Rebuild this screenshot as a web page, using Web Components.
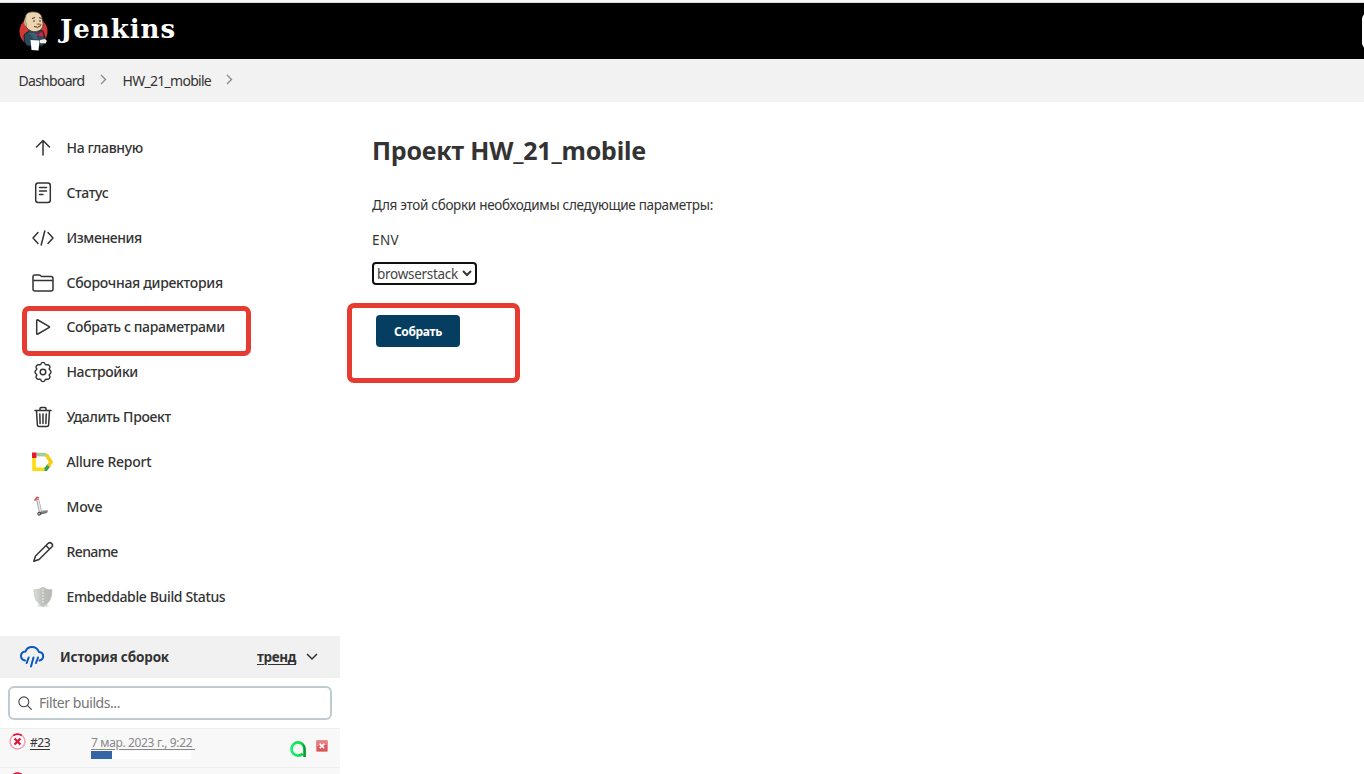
<!DOCTYPE html>
<html lang="ru">
<head>
<meta charset="utf-8">
<title>HW_21_mobile [Jenkins]</title>
<style>
html,body{margin:0;height:774px;overflow:hidden;background:#fff}
body{font-family:"Noto Sans","Open Sans",sans-serif;font-size:14px;color:#333}
</style>
</head>
<body>
<jenkins-app></jenkins-app>
<script>
const icons = {
up:'<g fill="none" stroke="#333" stroke-width="1.5" stroke-linecap="round" stroke-linejoin="round"><path d="M5.5 11 12 4.5 18.500 11M12 5v14"/></g>',
doc:'<g fill="none" stroke="#333" stroke-width="1.500" stroke-linecap="round"><rect x="4.700" y="2" width="14.600" height="19.500" rx="2.500"/><path d="M8.500 6.500h7M8.500 10h7M8.500 13.500h3.500"/></g>',
code:'<g fill="none" stroke="#333" stroke-width="1.500" stroke-linecap="round" stroke-linejoin="round"><path d="M7 6.500 2 12l5 5.500M17 6.500l5 5.500-5 5.500M13.800 5l-3.600 14"/></g>',
folder:'<g fill="none" stroke="#333" stroke-width="1.500" stroke-linejoin="round"><path d="M2 18V5.500Q2 4 3.500 4H8q1 0 2 1l.6.500H20q2 0 2 2V18q0 2-2 2H4q-2 0-2-2zM2 9.500h20"/></g>',
play:'<path d="M5.700 5.700v12.600q0 1.300 1.200.700l11-6.300q1.200-.700 0-1.400l-11-6.300q-1.200-.600-1.200.700z" fill="none" stroke="#333" stroke-width="1.500"/>',
gear:'<g transform="translate(12 12) scale(.0445) translate(-256 -256)" fill="none" stroke="#333" stroke-width="33" stroke-linejoin="round"><circle cx="256" cy="256" r="62"/><path d="M205 84Q256 -2 307 84Q320 106 347 107Q448 103 398 190Q372 222 390 244Q455 296 398 332Q398 332 398 332" stroke="none"/><path d="M210 74Q218 40 256 40T302 74Q312 102 342 94Q378 82 400 112Q424 142 406 166Q384 190 410 210Q462 256 410 302Q384 322 406 346Q424 370 400 400Q378 430 342 418Q312 410 302 438Q294 472 256 472T210 438Q200 410 170 418Q134 430 112 400Q88 370 106 346Q128 322 102 302Q50 256 102 210Q128 190 106 166Q88 142 112 112Q134 82 170 94Q200 102 210 74z"/></g>',
trash:'<g fill="none" stroke="#333" stroke-width="1.500" stroke-linecap="round" stroke-linejoin="round"><path d="M5.500 6l.9 14Q6.500 21.500 8 21.500h8q1.500 0 1.600-1.500l.9-14M4 5.500h16M9 5V3.500Q9 2.500 10 2.500h4q1 0 1 1V5M12 9v9.500M8.800 9l.3 9.500M15.200 9l-.3 9.500"/></g>',
allure:'<g fill="none" stroke-width="3.600"><path d="M3 8v11.200h11" stroke="#ffda13"/><path d="M5.500 4.600h9.500" stroke="#9fcca2"/><path d="M13.500 19.200h1.500l3-4" stroke="#36a154"/><path d="M14.700 4.800 16.500 6" stroke="#d8d72c"/><path d="M15.700 5.300 20 12l-2.500 4" stroke="#f8cc18"/></g><path d="M1 2.500h4.500v5.500H1z" fill="#e21a2c"/>',
move:'<path d="M6.500 4 9.500 17" stroke="#999" stroke-width="3"/><path d="M7 5 9.500 17" stroke="#eee" stroke-width="1.500"/><path d="m3.500 5.500 2.500-3 2 .5" fill="none" stroke="#e24a4a" stroke-width="1.600"/><path d="m8.500 17 7-2 1.500.500-1 2.500-8 2z" fill="#777"/><circle cx="8.200" cy="18.700" r="1.500" fill="#bbb" stroke="#333"/><path d="m10.500 16 5.500-.5" stroke="#bbb"/>',
pencil:'<g fill="none" stroke="#333" stroke-width="1.500" stroke-linejoin="round"><path d="M2.800 21.200 4.500 16 17 3.500q2-1.700 3.700 0t0 3.500L8 19.500zM15 5.500l3.700 3.700"/></g>',
shield:'<defs><linearGradient id="m" x1="0" x2="1"><stop stop-color="#dcded9"/><stop offset=".45" stop-color="#bfc2bb"/><stop offset="1" stop-color="#b4b7b0"/></linearGradient></defs><ellipse cx="12" cy="20.700" rx="6" ry="1.300" fill="#ddd"/><path d="M12 2.300Q16 5 21 4.700 21.500 17 12 21.500 2.500 17 3 4.700 8 5 12 2.300z" fill="url(#m)" stroke="#c3c6c0" stroke-width=".8"/><path d="M12 4v15.500" stroke="#eee" stroke-dasharray="2 1"/>',
rain:'<g fill="none" stroke="#0b57c2" stroke-width="2" stroke-linecap="round"><path d="M5 15.500Q1 14.500 1 11q0-4 4.500-4.500Q7 2 12 2t7 5q4.200.500 4.200 4.200 0 3.300-3.700 4.300"/><path d="M8.700 12.500l-2 5.500M13.500 12.500 11 21.500M18 12.500l-2 5.500"/></g>',
search:'<g fill="none" stroke="#444" stroke-width="1.900" stroke-linecap="round"><circle cx="10" cy="10" r="8.500"/><path d="m16.500 16.500 6.500 6.500"/></g>',
fail:'<circle cx="12" cy="12" r="10.500" fill="#fff" stroke="#f2a2ae" stroke-width="2.200"/><path d="M6 3.500Q12-.5 18 3.500" fill="none" stroke="#df1739" stroke-width="2.500"/><path d="m7.800 7.800 8.400 8.400m0-8.400-8.400 8.400" stroke="#df1739" stroke-width="3.300"/>',
ring:'<defs><linearGradient id="g" x1="0" x2="1"><stop stop-color="#16f073"/><stop offset=".75" stop-color="#09dc49"/><stop offset="1" stop-color="#099d34"/></linearGradient></defs><path d="M21.800 24V12A9.800 9.800 0 1 0 12 21.800q4 0 7-2.500" fill="none" stroke="url(#g)" stroke-width="4.200"/>',
delete:'<rect x="1" y="1" width="22" height="22" rx="1.500" fill="#d9575b" stroke="#e58f91" stroke-width="2"/><path d="M2 2h20v8L2 13z" fill="#e98084"/><path d="m7.500 7.500 9 9m0-9-9 9" stroke="#fff" stroke-width="3.500"/>',
butler:'<ellipse cx="14.500" cy="20.500" rx="14" ry="14" fill="#d33833"/><path d="M5 24 11 19l13 1 3 10-4 5H9Q5 34 5 24z" fill="#2c4a5c" stroke="#0c1c26"/><path d="M6.500 13Q4 1 13 .8 23 0 23.500 9q2 8-3 10.500-6 3-11-1Q7 17 6.500 13z" fill="#edd4ae" stroke="#3b3028" stroke-width=".8"/><path d="M6 7q-3 6 1.500 9l1-3Q6 11 8 5z" fill="#b8a589"/><path d="m13 7.500 3-1m4 0 2.500 1M14 10h2m4 0h2M15 15.500q4 2 7-1" fill="none" stroke="#473327"/><path d="M17 13q4-2 6 1-3 1-6-1z" fill="#a97a62"/><path d="m14 21.500 5 2 4.500-3.500 1 6-5.500-1.500-4 2z" fill="#d5284d" stroke="#6c2732" stroke-width=".6"/><path d="M10 22l5 6h4l-3-6z" fill="#3c6078"/><path d="m11.500 29 9 .5-1 10-7-.5z" fill="#fff"/><path d="m21 29 5-1 2 2-1.500 2.500-5.500-.5z" fill="#f7efe4"/>'
};
class JIcon extends HTMLElement{
 connectedCallback(){
  const n=this.getAttribute('name'),s=this.getAttribute('size')||24;
  const h=n==='butler'?40:s;
  this.attachShadow({mode:'open'}).innerHTML=`<style>:host{display:block;flex:none;width:${s}px;height:${h}px}svg{display:block;overflow:visible}</style><svg width="${s}" height="${h}" viewBox="${n==='butler'?'0 0 29 40':'0 0 24 24'}">${icons[n]}</svg>`;
 }
}
customElements.define('j-icon',JIcon);

/* Text label whose tracking is tuned so it occupies a given width. */
class FitText extends HTMLElement{
 connectedCallback(){
  const root=this.attachShadow({mode:'open'});
  const line=this.hasAttribute('underlined')?'text-decoration:underline;text-underline-offset:2px;text-decoration-thickness:1px;':'';
  root.innerHTML=`<style>:host{display:inline-block;white-space:pre;flex:none}span{display:inline-block;${line}}</style><span><slot></slot></span>`;
  const s=root.querySelector('span'),w=+this.getAttribute('w');
  const cur=s.getBoundingClientRect().width;
  if(cur&&w)s.style.letterSpacing=((w-cur)/this.textContent.length)+'px';
 }
}

class JHeader extends HTMLElement{
 connectedCallback(){
  this.attachShadow({mode:'open'}).innerHTML=`<style>
:host{display:block}
.edge{height:2px;background:#f7f8fa;border-bottom:1px solid #d9dadc}
header{height:56px;background:#000;display:flex;align-items:flex-start;justify-content:space-between;overflow:hidden}
.brand{display:flex;padding:8px 0 0 19px;gap:12px}
.name{font:bold 26px/36px "DejaVu Serif",serif;color:#fff}
.field{width:20px;height:36px;margin:10px -18px 0 0;background:#fff;border-radius:6px}
nav{height:43px;background:#f2f2f2;display:flex;align-items:center;padding-left:18.500px;box-sizing:border-box}
svg{margin:0 16px 2px 15px}
.bc{line-height:20px}
</style><div class="edge"></div><header><div class="brand"><j-icon name="butler" size="29"></j-icon><fit-text class="name" w="116">Jenkins</fit-text></div><div class="field"></div></header>
<nav><fit-text class="bc" w="66">Dashboard</fit-text><svg width="7" height="11" viewBox="0 0 7 11"><path d="m1 1 4.500 4.500L1 10" fill="none" stroke="#888" stroke-width="1.300"/></svg><fit-text class="bc" w="88.500">HW_21_mobile</fit-text><svg width="7" height="11" viewBox="0 0 7 11"><path d="m1 1 4.500 4.500L1 10" fill="none" stroke="#888" stroke-width="1.300"/></svg></nav>`;
 }
}

class JTask extends HTMLElement{
 connectedCallback(){
  this.attachShadow({mode:'open'}).innerHTML=`<style>
:host{display:flex;position:relative;box-sizing:border-box;height:44.900px;align-items:center;padding-left:31px;gap:11.500px;font-weight:500;line-height:20px;color:#333}
:host([marked]){padding-bottom:1.200px}
.mark{position:absolute;left:22px;top:1.300px;width:229px;height:50px;box-sizing:border-box;border:5px solid #e53b30;border-radius:7px}
</style><j-icon name="${this.getAttribute('icon')}"></j-icon><fit-text w="${this.getAttribute('w')-.7}">${this.getAttribute('label')}</fit-text>${this.hasAttribute('marked')?'<div class="mark"></div>':''}`;
 }
}

class JHistory extends HTMLElement{
 connectedCallback(){
  this.attachShadow({mode:'open'}).innerHTML=`<style>
:host{display:block;width:340px}
.head{height:42px;background:#f1f1f1;display:flex;align-items:center;padding:0 22px 0 20px;box-sizing:border-box;font-weight:700;font-size:13.500px;line-height:20px}
.head .t{margin-left:16px;flex:1}
.head .t,.head .trend{padding-bottom:1px}
.head svg{margin-left:10px}
.filter{height:34px;margin:8px 8px 8px;width:324px;border:2px solid #bfcbd1;border-radius:6px;box-sizing:border-box;display:flex;align-items:center;padding-left:8px;gap:7px;color:#757575}
.filter fit-text{padding-bottom:1px}
.row{height:40px;background:#f8f8f8;border-top:1px solid #eee;border-bottom:1px solid #eee;box-sizing:border-box;display:grid;grid-template-columns:30px 61px 198px 27px 24px;font-size:12px;line-height:16px}
.row+.row{border-top:0}
.s{padding:4px 0 0 9px}.n{padding-top:6px}.d{padding-top:6px;color:#888}
.bar{width:100px;height:8px;background:#fff}.bar i{display:block;width:21px;height:8px;background:#3465a4}
.d fit-text{display:block}
.a{padding:12px 0 0 1px}.x{padding-top:11px}
</style>
<div class="head"><j-icon name="rain"></j-icon><div class="t"><fit-text w="109">История сборок</fit-text></div><div class="trend"><fit-text underlined w="39">тренд</fit-text></div><svg width="12" height="8" viewBox="0 0 12 8"><path d="m1 1 5 5 5-5" fill="none" stroke="#333" stroke-width="1.500"/></svg></div>
<div class="filter"><j-icon name="search" size="14"></j-icon><fit-text w="81">Filter builds...</fit-text></div>
<div class="row"><div class="s"><j-icon name="fail" size="17"></j-icon></div><div class="n"><fit-text underlined w="20">#23</fit-text></div><div class="d"><fit-text underlined w="104">7 мар. 2023 г., 9:22 </fit-text><div class="bar"><i></i></div></div><div class="a"><j-icon name="ring" size="16"></j-icon></div><div class="x"><j-icon name="delete" size="12"></j-icon></div></div>
<div class="row"><div class="s"><j-icon name="fail" size="17"></j-icon></div></div>`;
 }
}

class JBuildForm extends HTMLElement{
 connectedCallback(){
  this.attachShadow({mode:'open'}).innerHTML=`<style>
:host{display:block;padding:29px 0 0 32px}
h1{margin:0;font-size:25px;line-height:38px;font-weight:700}
p{margin:25.500px 0 0;line-height:20px;font-size:13.500px}
.env{margin-top:15px;line-height:20px;font-size:13.500px}
.select{margin-top:12px;width:105px;height:23px;border:2px solid #101010;border-radius:4px;box-sizing:border-box;display:flex;align-items:center;gap:4px;padding-left:3px;line-height:19px;font-size:13.500px;color:#444}
.select fit-text{padding-top:2px}
.group{margin:18px 0 0 -25px;width:173px;height:80px;border:5px solid #e53b30;border-radius:7px;box-sizing:border-box;padding:7px 0 0 24px}
button{display:flex;align-items:center;justify-content:center;width:84px;height:32px;border:0;border-radius:4px;background:#063e61;color:#fff;font:700 12px/20px "Noto Sans",sans-serif;padding:2px 0 0}
</style>
<h1><fit-text w="274">Проект HW_21_mobile</fit-text></h1>
<p><fit-text w="341">Для этой сборки необходимы следующие параметры:</fit-text></p>
<div class="env"><fit-text w="27">ENV</fit-text></div>
<div class="select"><fit-text w="81">browserstack</fit-text><svg width="10" height="7" viewBox="0 0 10 7"><path d="m1 1 4 4 4-4" fill="none" stroke="#333" stroke-width="2"/></svg></div>
<div class="group"><button><fit-text w="48">Собрать</fit-text></button></div>`;
 }
}

class JApp extends HTMLElement{
 connectedCallback(){
  this.attachShadow({mode:'open'}).innerHTML=`<style>
:host{display:block;height:774px;overflow:hidden}
main{display:grid;grid-template-columns:340px 1fr}
.tasks{padding-top:23.500px;height:534px;box-sizing:border-box}
</style><j-header></j-header><main><aside><div class="tasks">
<j-task icon="up" w="77" label="На главную"></j-task>
<j-task icon="doc" w="42.500" label="Статус"></j-task>
<j-task icon="code" w="76" label="Изменения"></j-task>
<j-task icon="folder" w="157" label="Сборочная директория"></j-task>
<j-task icon="play" w="159" label="Собрать с параметрами" marked></j-task>
<j-task icon="gear" w="72" label="Настройки"></j-task>
<j-task icon="trash" w="105" label="Удалить Проект"></j-task>
<j-task icon="allure" w="85.500" label="Allure Report"></j-task>
<j-task icon="move" w="36.500" label="Move"></j-task>
<j-task icon="pencil" w="52" label="Rename"></j-task>
<j-task icon="shield" w="159.500" label="Embeddable Build Status"></j-task>
</div><j-history></j-history></aside><j-build-form></j-build-form></main>`;
 }
}
customElements.define('j-header',JHeader);
customElements.define('j-task',JTask);
customElements.define('j-history',JHistory);
customElements.define('j-build-form',JBuildForm);
customElements.define('jenkins-app',JApp);
customElements.define('fit-text',FitText);
</script>
</body>
</html>
